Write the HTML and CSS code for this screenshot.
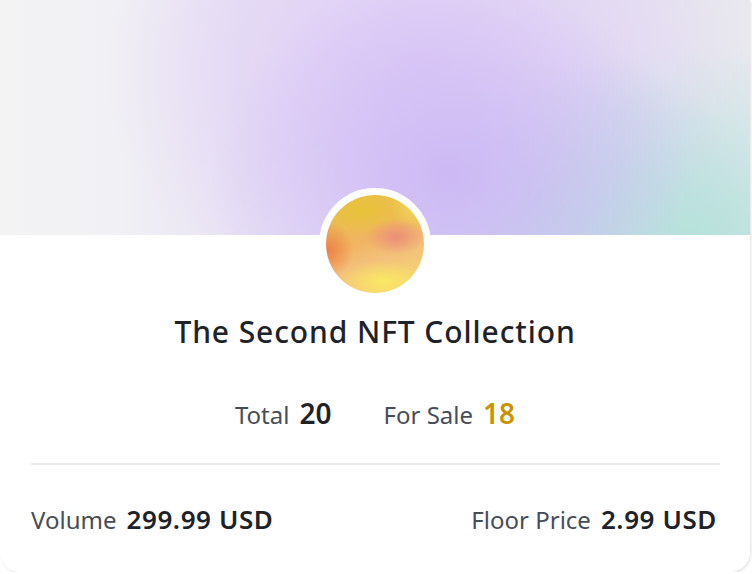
FILE: index.html
```
<!DOCTYPE html>
<html>
<head>
<meta charset="utf-8">
<link rel="stylesheet" href="styles.css">
</head>
<body>
<div class="card">
  <div class="banner"></div>
  <div class="avatar"><div class="avatar-img"></div></div>
  <h1 class="title">The Second NFT Collection</h1>
  <div class="stats">
    <div class="stat"><span class="label">Total</span><span class="num">20</span></div>
    <div class="stat"><span class="label">For Sale</span><span class="num gold">18</span></div>
  </div>
  <div class="divider"></div>
  <div class="bottom">
    <div class="stat"><span class="label">Volume</span><span class="val">299.99 USD</span></div>
    <div class="stat"><span class="label">Floor Price</span><span class="val">2.99 USD</span></div>
  </div>
</div>
</body>
</html>
```
FILE: styles.css
```
html, body {
  margin: 0;
  padding: 0;
  background: #ffffff;
}
body {
  font-family: "Noto Sans", Inter, sans-serif;
  color: #1e2329;
}
.card {
  width: 750px;
  height: 572px;
  background: #fff;
  border-radius: 0 0 20px 20px;
  box-shadow: 1px 1px 3px rgba(0, 0, 0, 0.12);
  display: flex;
  flex-direction: column;
  align-items: center;
  overflow: hidden;
}
.banner {
  width: 100%;
  height: 235px;
  flex: none;
  background:
    radial-gradient(ellipse 240px 200px at 450px 175px, rgba(204, 184, 245, 0.95), rgba(204, 184, 245, 0) 100%),
    radial-gradient(ellipse 320px 240px at 420px 70px, rgba(222, 202, 246, 0.85), rgba(222, 202, 246, 0) 100%),
    radial-gradient(ellipse 270px 190px at 690px 235px, rgba(182, 226, 219, 1), rgba(182, 226, 219, 0) 100%),
    radial-gradient(ellipse 200px 160px at 560px 210px, rgba(186, 204, 234, 0.9), rgba(186, 204, 234, 0) 100%),
    linear-gradient(90deg, #f3f3f4 0%, #f1f0f4 16%, #e8e2f4 32%, #e3daf5 55%, #e6e2f1 85%, #e8e8ee 100%);
}
.avatar {
  margin-top: -47px;
  width: 98px;
  height: 98px;
  border: 7px solid #fff;
  border-radius: 50%;
  background: #fff;
  flex: none;
}
.avatar-img {
  width: 100%;
  height: 100%;
  border-radius: 50%;
  background:
    radial-gradient(ellipse 30px 18px at 70px 42px, rgba(236, 140, 122, 0.95), rgba(236, 140, 122, 0)),
    radial-gradient(ellipse 26px 28px at 2px 55px, rgba(236, 128, 70, 0.95), rgba(236, 128, 70, 0)),
    radial-gradient(ellipse 45px 20px at 58px 86px, rgba(250, 232, 100, 1), rgba(250, 232, 100, 0)),
    radial-gradient(ellipse 45px 26px at 38px 15px, rgba(232, 194, 56, 1), rgba(232, 194, 56, 0)),
    radial-gradient(ellipse 30px 30px at 92px 8px, rgba(242, 222, 84, 1), rgba(242, 222, 84, 0)),
    linear-gradient(160deg, #e8c448 0%, #f0b462 45%, #f3c07a 62%, #f7da70 100%);
}
.title {
  margin: 12px 0 0;
  font-size: 30px;
  line-height: 40px;
  font-weight: 500;
  color: #1e2329;
  letter-spacing: 0.9px;
}
.stats {
  margin-top: 42px;
  display: flex;
  gap: 52px;
  align-items: baseline;
}
.stat {
  display: flex;
  align-items: baseline;
  gap: 10px;
}
.label {
  font-size: 24px;
  color: #474d57;
  font-weight: 400;
}
.num {
  font-size: 28px;
  font-weight: 600;
  color: #1e2329;
}
.num.gold {
  color: #c99400;
}
.divider {
  margin-top: 31px;
  width: 689px;
  height: 2px;
  background: #eaecef;
  flex: none;
}
.bottom {
  margin-top: 36px;
  width: 100%;
  box-sizing: border-box;
  padding: 0 33px 0 31px;
  display: flex;
  justify-content: space-between;
  align-items: baseline;
}
.val {
  font-size: 26px;
  font-weight: 600;
  color: #1e2329;
  letter-spacing: 0.6px;
}
```
